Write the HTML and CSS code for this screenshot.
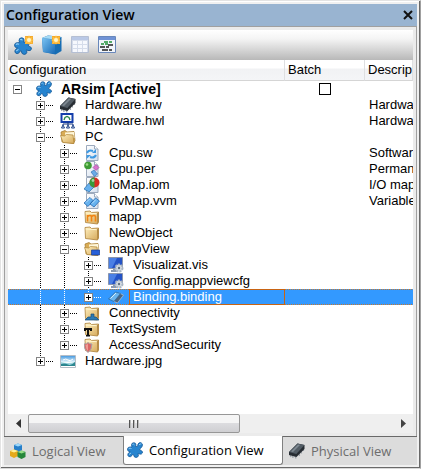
FILE: index.html
```html
<!DOCTYPE html>
<html lang="en">
<head>
<meta charset="utf-8">
<title>Configuration View</title>
<link rel="stylesheet" href="styles.css">
</head>
<body>
<svg class="defs" aria-hidden="true">
  <defs>
    <linearGradient id="gold" x1="0" y1="0" x2="1" y2="1"><stop offset="0" stop-color="#fff0c0"/><stop offset="1" stop-color="#d5a858"/></linearGradient>
    <linearGradient id="blue" x1="0" y1="0" x2="1" y2="1"><stop offset="0" stop-color="#7cc4f3"/><stop offset="1" stop-color="#1769b5"/></linearGradient>
    <linearGradient id="sky" x1="0" y1="0" x2="0" y2="1"><stop offset="0" stop-color="#4a9be0"/><stop offset="1" stop-color="#e3f5fb"/></linearGradient>
    <linearGradient id="page" x1="0" y1="0" x2="1" y2="1"><stop offset="0" stop-color="#fff"/><stop offset="1" stop-color="#d3dfee"/></linearGradient>
    <symbol id="puzzle" viewBox="0 0 16 16">
      <path d="M5 5L4.500 3Q4.500 .700 7 .700Q9.200 1 9 3L8.500 4.500L10.500 4.500L11 2Q12 .300 14 .700Q16 1.500 15.300 4Q14.500 6 12.500 7L13 8L14 8.500Q16 9.200 15.400 11Q14.600 12.600 12.500 12L11 11.500L11 12L11.500 13.500Q11 15.500 9 15.500Q6.500 15.200 6.500 12.500L6 12L5 13.500Q3.500 15.400 1.700 14.500Q.300 13.500 1 11.800Q1.600 10.600 3 10L3 9.500L2 9.500Q.300 9 .500 6.800Q1 5 3 5z" fill="#2684cf" stroke="#185b99" stroke-width=".8"/>
      <path d="M5.500 2.500Q6.500 1.500 7.500 3M12 3Q13 1.500 14.300 2M1.700 6.700Q3 5.600 4.500 6.500M2 12.500L4 11" fill="none" stroke="#8fccf5"/>
    </symbol>
    <symbol id="star" viewBox="0 0 10 10">
      <path d="M1 1h8v8H1z" fill="#f4a92c"/><path d="M5 0l1.200 3L9 1.500 7.300 4.200 10 5 7.300 6.200 9 9 6 7.400 5 10 4 7.400 1 9l1.500-2.800L0 5l2.500-.8L1 1.500l2.900 1.500z" fill="#ffc44c"/><circle cx="5" cy="5" r="2" fill="#fff6c9"/>
    </symbol>
    <symbol id="newconf" viewBox="0 0 20 20"><use href="#puzzle" x="0" y="2" width="18" height="18"/><use href="#star" x="10" y="0" width="10" height="10"/></symbol>
    <symbol id="newobj" viewBox="0 0 20 20">
      <path d="M0 3l6-2.500 13.500 1.500v14L13.500 19.500 1 17z" fill="#176db3"/><path d="M0 3l13 1.500V19L1 17z" fill="url(#blue)"/><path d="M0 3l6-2.500 13.500 1.500L13 4.500z" fill="#a5daf5"/>
      <use href="#star" x="9" y="0" width="10" height="10"/>
    </symbol>
    <symbol id="grid" viewBox="0 0 18 18">
      <path d="M.5.5h17v16H.500z" fill="#d5dcea" stroke="#b5bfd3"/><path d="M1 1h16v3H1z" fill="#b9c8e6"/><path d="M2 5h4v3H2zM7 5h4v3H7zM12 5h4v3h-4zM2 9h4v3H2zM7 9h4v3H7zM12 9h4v3h-4zM2 13h4v3H2zM7 13h4v3H7zM12 13h4v3h-4z" fill="#f6f8fd"/>
    </symbol>
    <symbol id="listing" viewBox="0 0 18 18">
      <path d="M.5.5h17v16H.500z" fill="#f1f5fb" stroke="#6887ba"/><path d="M1 1h16v3H1z" fill="#6f92d5"/>
      <path d="M6 6h4M11 6h3M3 8h3M7 8h3" stroke="#21933a" stroke-width="1.400"/><path d="M10 9h5M2 11h5M8 11h3M4 14h6M11 14h3" stroke="#222" stroke-width="1.600"/>
    </symbol>
    <symbol id="chip" viewBox="0 0 16 16">
      <path d="M1 11l1 3M3.500 12l.5 3M6 12.500l1 3M10 10l.5 3M12 7.500l.5 3M14 5l.5 3" stroke="#9ca3aa" stroke-width="1.300"/>
      <path d="M0 9L8.500.500 15.500 2v4L7.500 14 0 12z" fill="#272d33"/><path d="M0 9L8.500.500 15.500 2 7.300 11z" fill="#525c65"/><path d="M2 8.500L9 1.500l2 .4-7 7z" fill="#7f8992"/>
    </symbol>
    <symbol id="network" viewBox="0 0 16 16">
      <path d="M1.500 1h11v8h-11z" fill="#fff" stroke="#153eab" stroke-width="2"/><path d="M4 7l1-2.500 2-1 2 1L10 7" fill="none" stroke="#27844b" stroke-width="1.300"/>
      <path d="M3 12v-1h10v1M8 9v3" fill="none" stroke="#16367c"/><path d="M1.500 15l1.500-3 1.500 3zM6.500 15L8 12l1.500 3zM11.500 15l1.500-3 1.500 3z" fill="#fff" stroke="#1a3e85"/>
    </symbol>
    <symbol id="open" viewBox="0 0 16 16">
      <path d="M2 13L1 3l4-1.500 2 1.500 7-.500 1 9-1.500 3z" fill="#d9ac55" stroke="#a17427" stroke-width=".7"/><path d="M5 3.500l9-.5.500 6-9 1z" fill="#fff7da"/><path d="M.500 6.500l4 .5 2-1.500 6.500.500 1 8.500-11-1z" fill="url(#gold)" stroke="#ae8235" stroke-width=".7"/>
    </symbol>
    <symbol id="folder" viewBox="0 0 16 16">
      <path d="M1 2.500l5-.500 1.500 1.500 7-.500v10L13.500 15 1.500 13.500z" fill="url(#gold)" stroke="#ac8038" stroke-width=".8"/><path d="M13 4.500l1.500-1.500v10L13.300 15z" fill="#b18742"/><path d="M1.700 4l11 .7" stroke="#fff6cf"/>
    </symbol>
    <symbol id="mapp" viewBox="0 0 16 16"><use href="#folder"/><path d="M3.500 12.500V6M3.500 7.500q3-2 4 0v5M7.500 7.500q3-2 4 0v5" fill="none" stroke="#f18413" stroke-width="1.600"/></symbol>
    <symbol id="mappview" viewBox="0 0 16 16"><use href="#open"/><path d="M7.500 9h8v5h-8z" fill="#275fd8" stroke="#183e91" stroke-width=".7"/></symbol>
    <symbol id="sheet" viewBox="0 0 16 16"><path d="M2.500.5h8L14 4v11.500H2.500z" fill="url(#page)" stroke="#9daabd"/><path d="M10.500.5V4H14" fill="#fff" stroke="#9daabd"/></symbol>
    <symbol id="sw" viewBox="0 0 16 16">
      <use href="#sheet"/><path d="M3 8Q4.500 4.500 9 6M12 10Q10.500 13.500 6 12" fill="none" stroke="#3e99e2" stroke-width="2"/><path d="M8 8h4V4zM7 10H2.500v4z" fill="#3e99e2"/>
    </symbol>
    <symbol id="per" viewBox="0 0 16 16">
      <use href="#sheet"/><circle cx="4" cy="4.500" r="3.800" fill="#3e9b35"/><circle cx="3" cy="3.500" r="1.300" fill="#9ddc87"/><path d="M9 6.500l3-3 3 3-3 3z" fill="#d873ce" stroke="#963c91" stroke-width=".6"/><path d="M7 11l3-2 3.500 4-3 2.500z" fill="#69aae8" stroke="#2965a6" stroke-width=".6"/>
    </symbol>
    <symbol id="iom" viewBox="0 0 16 16">
      <use href="#sheet"/><path d="M0 12l5-6 5 4-5 5z" fill="#67b0ed" stroke="#286da9" stroke-width=".7"/><circle cx="10.500" cy="5.500" r="5" fill="#d62e25"/><path d="M10.500.5a5 5 0 0 0 0 10z" fill="#359b3b"/><circle cx="9" cy="3.500" r="1.400" fill="#fff" opacity=".55"/>
    </symbol>
    <symbol id="vvm" viewBox="0 0 16 16">
      <use href="#sheet"/><path d="M0 10l6-5.500 3 3L4 13.500zM6 11l5.500-6L15.500 8 10 14z" fill="#66b2ef" stroke="#2367ad" stroke-width=".8"/><path d="M2 9.500l4-4M8 10.500L12 6.500" stroke="#b9e1fd"/>
    </symbol>
    <symbol id="screen" viewBox="0 0 16 16">
      <path d="M.5.5h14v11H.500z" fill="#2453c6" stroke="#8995ad"/><path d="M1 1h8l-5 10H1z" fill="#4b80e5"/><path d="M3 14h7M6 12v2" stroke="#8c9ab0" stroke-width="2"/>
      <circle cx="11" cy="11" r="3.500" fill="#d5dce3" stroke="#a9b6c4" stroke-width="2" stroke-dasharray="2 1"/><circle cx="11" cy="11" r="1.200" fill="#5e7082"/>
    </symbol>
    <symbol id="bind" viewBox="0 0 16 16">
      <path d="M5 12l6-8 4.500 2L9.500 14z" fill="#4c6580" stroke="#a7bed3" stroke-width=".8"/><path d="M.5 10l7-7 5 1.500-6.500 8z" fill="#6bb5ee" stroke="#28639a" stroke-width=".7"/><path d="M2.500 9.500L8 4" stroke="#d6effd"/>
    </symbol>
    <symbol id="conn" viewBox="0 0 16 16"><use href="#folder"/><path d="M7 9h3v3h2l3 3H1l3-3h3z" fill="#2b7ab4" stroke="#174c75" stroke-width=".7"/></symbol>
    <symbol id="text" viewBox="0 0 16 16"><use href="#folder"/><path d="M0 7h8v3H6V9H5v5h1v1.500H2V14h1V9H2v1H0z" fill="#111"/></symbol>
    <symbol id="access" viewBox="0 0 16 16"><use href="#folder"/><path d="M0 7q3 0 4-1.500Q5.500 7 8 7q0 6-4 8.500Q0 13 0 7z" fill="#db6666" stroke="#a7a7a7"/><path d="M4 7v7q-2-2-2.500-6z" fill="#ef9c95"/></symbol>
    <symbol id="image" viewBox="0 0 16 16">
      <path d="M.5 2.500h15v12H.500z" fill="#fff" stroke="#b4bcc5"/><path d="M1 3h14v6H1z" fill="url(#sky)"/><path d="M1 9q7 2 14 0v2L8 13H1z" fill="#9fd5df"/><path d="M1 11q4-1 7 .500T15 9v4H1z" fill="#2b8790"/><path d="M3 7q3-2 5 0t5-1" fill="none" stroke="#fff"/>
    </symbol>
    <symbol id="cubes" viewBox="0 0 16 16">
      <path d="M4 2l4-1.500 4 1.500v5L8 9 4 7z" fill="#277fc9"/><path d="M4 2l4-1.500 4 1.500-4 1.500z" fill="#9ed8fa"/>
      <path d="M0 8l4-1.500L8 8v5l-4 2-4-2z" fill="#e5a91a"/><path d="M0 8l4-1.500L8 8 4 9.500z" fill="#fff095"/>
      <path d="M7.500 9l4-1.500 4 1.500v5l-4 2-4-2z" fill="#27873b"/><path d="M7.500 9l4-1.500 4 1.500-4 1.500z" fill="#96de87"/>
    </symbol>
  </defs>
</svg>
<main class="window">
  <header class="title"><h1>Configuration View</h1>
    <button class="close" aria-label="Close"><svg viewBox="0 0 10 10"><path d="M1 1l8 8M9 1L1 9" stroke="#111" stroke-width="2"/></svg></button>
  </header>
  <section class="panel">
    <div class="toolbar">
      <button aria-label="New configuration"><svg><use href="#newconf"/></svg></button>
      <button aria-label="New object"><svg><use href="#newobj"/></svg></button>
      <button class="small" aria-label="Table" disabled><svg><use href="#grid"/></svg></button>
      <button class="small" aria-label="Properties"><svg><use href="#listing"/></svg></button>
    </div>
    <div class="scroll">
      <table>
        <colgroup><col class="c-name"><col class="c-batch"><col class="c-desc"></colgroup>
        <thead><tr><th>Configuration</th><th>Batch</th><th>Description</th></tr></thead>
        <tbody>
          <tr><td><div class="node root"><button class="box minus" aria-label="Collapse"></button><svg><use href="#puzzle"/></svg><span>ARsim [Active]</span></div></td><td class="tick"><input type="checkbox" aria-label="Batch ARsim"></td><td></td></tr>
          <tr><td><div class="node"><i class="join"><button class="box" aria-label="Expand"></button></i><svg><use href="#chip"/></svg><span>Hardware.hw</span></div></td><td></td><td>Hardware</td></tr>
          <tr><td><div class="node"><i class="join"><button class="box" aria-label="Expand"></button></i><svg><use href="#network"/></svg><span>Hardware.hwl</span></div></td><td></td><td>Hardware</td></tr>
          <tr><td><div class="node"><i class="join"><button class="box minus" aria-label="Collapse"></button></i><svg><use href="#open"/></svg><span>PC</span></div></td><td></td><td></td></tr>
          <tr><td><div class="node"><i class="line"></i><i class="join"><button class="box" aria-label="Expand"></button></i><svg><use href="#sw"/></svg><span>Cpu.sw</span></div></td><td></td><td>Software</td></tr>
          <tr><td><div class="node"><i class="line"></i><i class="join"><button class="box" aria-label="Expand"></button></i><svg><use href="#per"/></svg><span>Cpu.per</span></div></td><td></td><td>Permanent</td></tr>
          <tr><td><div class="node"><i class="line"></i><i class="join"><button class="box" aria-label="Expand"></button></i><svg><use href="#iom"/></svg><span>IoMap.iom</span></div></td><td></td><td>I/O mapping</td></tr>
          <tr><td><div class="node"><i class="line"></i><i class="join"><button class="box" aria-label="Expand"></button></i><svg><use href="#vvm"/></svg><span>PvMap.vvm</span></div></td><td></td><td>Variable</td></tr>
          <tr><td><div class="node"><i class="line"></i><i class="join"><button class="box" aria-label="Expand"></button></i><svg><use href="#mapp"/></svg><span>mapp</span></div></td><td></td><td></td></tr>
          <tr><td><div class="node"><i class="line"></i><i class="join"><button class="box" aria-label="Expand"></button></i><svg><use href="#folder"/></svg><span>NewObject</span></div></td><td></td><td></td></tr>
          <tr><td><div class="node"><i class="line"></i><i class="join"><button class="box minus" aria-label="Collapse"></button></i><svg><use href="#mappview"/></svg><span>mappView</span></div></td><td></td><td></td></tr>
          <tr><td><div class="node"><i class="line"></i><i class="line"></i><i class="join"><button class="box" aria-label="Expand"></button></i><svg><use href="#screen"/></svg><span>Visualizat.vis</span></div></td><td></td><td></td></tr>
          <tr><td><div class="node"><i class="line"></i><i class="line"></i><i class="join"><button class="box" aria-label="Expand"></button></i><svg><use href="#screen"/></svg><span>Config.mappviewcfg</span></div></td><td></td><td></td></tr>
          <tr class="selected"><td><div class="node"><i class="line"></i><i class="line"></i><i class="join last"><button class="box" aria-label="Expand"></button></i><svg><use href="#bind"/></svg><span>Binding.binding</span></div></td><td></td><td></td></tr>
          <tr><td><div class="node"><i class="line"></i><i class="join"><button class="box" aria-label="Expand"></button></i><svg><use href="#conn"/></svg><span>Connectivity</span></div></td><td></td><td></td></tr>
          <tr><td><div class="node"><i class="line"></i><i class="join"><button class="box" aria-label="Expand"></button></i><svg><use href="#text"/></svg><span>TextSystem</span></div></td><td></td><td></td></tr>
          <tr><td><div class="node"><i class="line"></i><i class="join last"><button class="box" aria-label="Expand"></button></i><svg><use href="#access"/></svg><span>AccessAndSecurity</span></div></td><td></td><td></td></tr>
          <tr><td><div class="node"><i class="join last"><button class="box" aria-label="Expand"></button></i><svg><use href="#image"/></svg><span>Hardware.jpg</span></div></td><td></td><td></td></tr>
        </tbody>
      </table>
    </div>
    <div class="bar">
      <button aria-label="Scroll left"><svg viewBox="0 0 5 9"><path d="M5 0v9L0 4.500z" fill="#333"/></svg></button>
      <div class="track"><div class="thumb"><b></b><b></b><b></b></div></div>
      <button aria-label="Scroll right"><svg viewBox="0 0 5 9"><path d="M0 0v9l5-4.500z" fill="#444"/></svg></button>
    </div>
  </section>
  <nav class="tabs">
    <button class="logical"><svg><use href="#cubes"/></svg>Logical View</button>
    <button class="active"><svg><use href="#puzzle"/></svg>Configuration View</button>
    <button><svg><use href="#chip"/></svg>Physical View</button>
  </nav>
</main>
</body>
</html>
```
FILE: styles.css
```css
* { box-sizing: border-box; }
body { margin: 0; background: #f0f0f0; font: 13px/16px "Liberation Sans", Arial, sans-serif; color: #000; }
button { margin: 0; padding: 0; border: 0; background: none; font: inherit; color: inherit; }
svg { display: block; flex: none; }
.defs { position: absolute; width: 0; height: 0; }

.window {
  display: flex; flex-direction: column; height: 100vh;
  padding: 3px 1px 1px 3px;
  border: 1px solid #e3e3e3; border-right-color: #a0a0a0; border-bottom-color: #d8d8d8;
  box-shadow: inset -1px -1px #696969, inset 1px 1px #fff;
}
.title { display: flex; align-items: center; justify-content: space-between; height: 23px; margin-right: 2px; padding: 0 4px 0 2px; background: #99b4d1; border-bottom: 1px solid #a0a0a0; }
.title h1 { margin: 0; font: 600 14px/20px "Open Sans", "Noto Sans", sans-serif; }
.close svg { width: 10px; height: 10px; }

.panel { flex: 1; min-height: 0; display: flex; flex-direction: column; margin-right: 2px; padding: 3px; background: #ebebeb; border-left: 1px solid #a0a0a0; border-right: 1px solid #a0a0a0; }
.toolbar { display: flex; align-items: center; gap: 8px; height: 30px; padding: 0 6px; background: linear-gradient(#fff, #f4f4f4 30%, #b8b8b8); }
.toolbar svg { width: 20px; height: 20px; }
.toolbar .small { padding-left: 1px; }
.toolbar .small svg { width: 18px; height: 18px; }

.scroll { flex: 1; min-height: 0; overflow: hidden; background: #fff; }
table { table-layout: fixed; width: 100%; min-width: 405px; border-collapse: separate; border-spacing: 0; }
.c-name { width: 277px; }
.c-batch { width: 80px; }
th, td { padding: 0; height: 16px; text-align: left; font-weight: normal; white-space: nowrap; overflow: hidden; }
th { height: 21px; padding-left: 1px; background: linear-gradient(#fff 40%, #f1f2f4 45%, #f4f5f7); border-bottom: 1px solid #d5d5d5; border-right: 1px solid #dedfe1; }
th + th { padding-left: 3px; }
td + td { padding-left: 4px; }
.tick input { display: block; appearance: none; width: 12px; height: 12px; margin: 0 0 0 30px; border: 1px solid #000; }

.node { display: flex; align-items: center; height: 16px; }
.node:not(.root) { padding-left: 20px; }
.node svg { width: 16px; height: 16px; margin-left: 8px; }
.node span { flex: 1; margin-left: 5px; padding-left: 4px; }
.root { padding-left: 5px; font-weight: bold; font-size: 14px; }
.root svg { margin-left: 14px; }
.box { flex: none; width: 9px; height: 9px; border: 1px solid #848484; background: linear-gradient(#000, #000) center / 5px 1px no-repeat, linear-gradient(#000, #000) center / 1px 5px no-repeat, #fff; }
.box.minus { background: linear-gradient(#000, #000) center / 5px 1px no-repeat, #fff; }
.line, .join {
  --dots: repeating-linear-gradient(#000 0 1px, transparent 1px 2px);
  --dash: repeating-linear-gradient(90deg, #000 0 1px, transparent 1px 2px);
  flex: none; display: flex; align-items: center; width: 24px; height: 16px; padding-left: 8px;
  background: var(--dots) 12px 0 / 1px 16px no-repeat;
}
.join { width: 26px; margin-right: -2px; background: var(--dots) 12px 0 / 1px 16px no-repeat, var(--dash) 18px 8px / 8px 1px no-repeat; }
.join.last { background: var(--dots) 12px 0 / 1px 8px no-repeat, var(--dash) 18px 8px / 8px 1px no-repeat; }
.selected { color: #fff; }
.selected td { background: repeating-linear-gradient(90deg, #c8782c 0 1px, #3399ff 1px 2px) top / 100% 1px no-repeat, repeating-linear-gradient(90deg, #c8782c 0 1px, #3399ff 1px 2px) bottom / 100% 1px no-repeat, #3399ff; }
.selected .line, .selected .join { --dots: repeating-linear-gradient(#fff 0 1px, transparent 1px 2px); --dash: repeating-linear-gradient(90deg, #fff 0 1px, transparent 1px 2px); }
.selected span { height: 16px; padding-left: 3px; line-height: 14px; border: 1px solid #c86414; }

.bar { display: flex; height: 19px; background: #efefef; }
.bar button { display: flex; align-items: center; justify-content: center; width: 20px; }
.bar button svg { width: 5px; height: 9px; }
.track { flex: 1; }
.thumb { display: flex; align-items: center; justify-content: center; gap: 2px; width: 58%; height: 19px; border: 1px solid #979797; border-radius: 2px; background: linear-gradient(#f5f5f5 45%, #dcdcdf 50%, #cfcfd2); }
.thumb b { width: 2px; height: 8px; border-left: 1px solid #555; background: #bbb; }

.tabs { display: flex; height: 31px; margin-right: 2px; background: #dcdcdc; border-top: 1px solid #696969; border-bottom: 2px solid #f0f0f0; font: 13px/18px "Open Sans", "Noto Sans", sans-serif; color: #6d6d6d; }
.tabs button { display: flex; align-items: center; gap: 6px; height: 28px; padding: 0 6px; white-space: nowrap; }
.tabs svg { width: 16px; height: 16px; }
.tabs .logical { width: 119px; }
.tabs .active { width: 160px; margin-top: -1px; padding: 0 3px; height: 29px; background: #fff; border: 1px solid #808080; border-top: 0; border-radius: 0 0 3px 3px; color: #000; }
```
